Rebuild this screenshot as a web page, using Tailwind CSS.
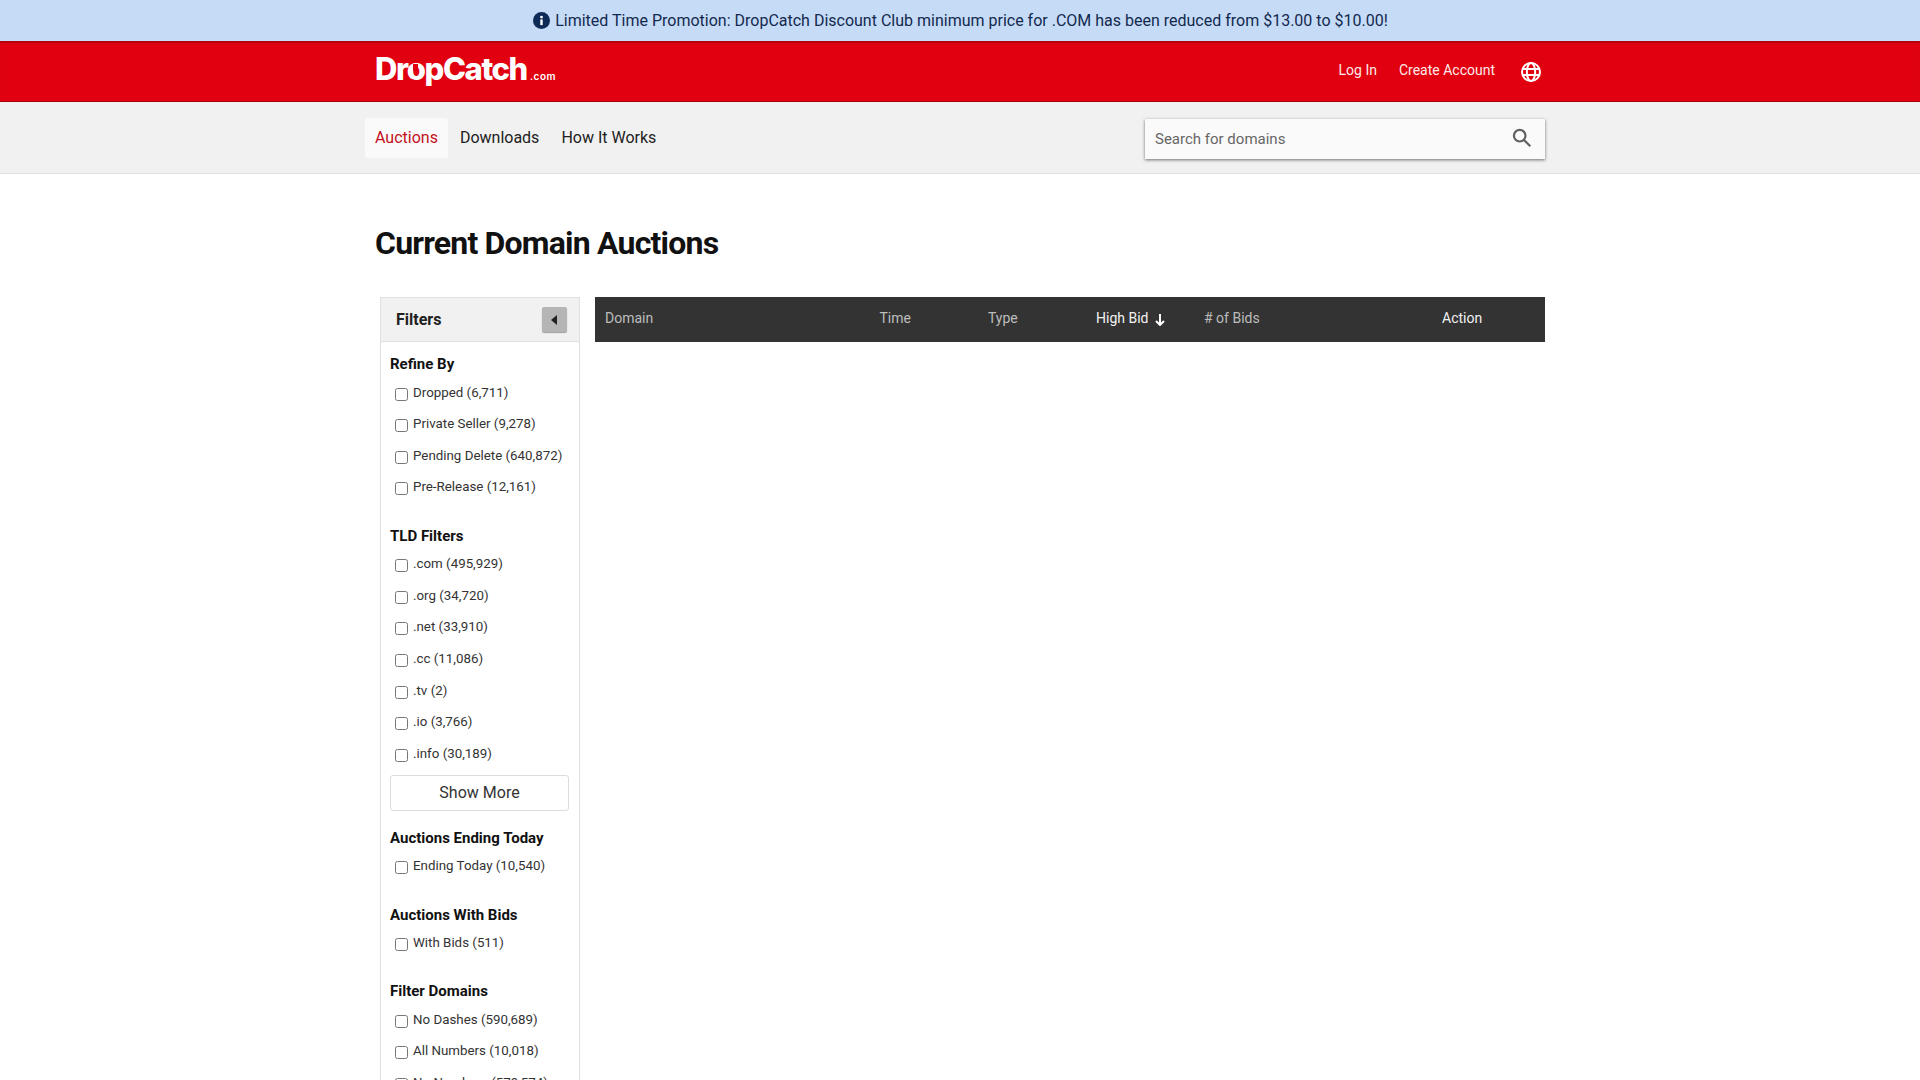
<!DOCTYPE html>
<html lang="en">
<head>
<meta charset="utf-8">
<title>Current Domain Auctions</title>
<script src="https://cdn.jsdelivr.net/npm/@tailwindcss/browser@4"></script>
</head>
<body class="h-[1080px] overflow-hidden bg-white font-[Roboto,sans-serif] text-[#212121]">
<div class="flex h-[41px] items-center justify-center gap-[6px] bg-[#c6dcf6] text-[16px] text-[#13294f]">
  <svg class="h-[17px] w-[17px] translate-x-[1px]" viewBox="0 0 24 24"><circle cx="12" cy="12" r="12" fill="#0e2a56"/><rect x="10.3" y="10.5" width="3.4" height="8" fill="#fff"/><circle cx="12" cy="7.2" r="2" fill="#fff"/></svg>
  <span>Limited Time Promotion: DropCatch Discount Club minimum price for .COM has been reduced from $13.00 to $10.00!</span>
</div>
<header class="h-[61px] border-y border-t-[#b3000b] border-b-[#a8000a] bg-[#e1000f] shadow-[inset_0_1px_1px_#b3000b]">
  <div class="mx-auto flex h-full w-[1190px] items-center justify-between pr-[14px] pl-[10px]">
    <div class="relative flex items-baseline pb-[7px] text-white">
      <span class="font-[Inter,sans-serif] text-[31px] leading-none font-extrabold tracking-[-1.4px]">DropCatch</span>
      <span class="ml-[3px] font-[Inter,sans-serif] text-[10px] leading-none font-semibold tracking-[0.5px]">.com</span>
      <span class="absolute top-[11px] left-[38px] h-[8px] w-[5px] rounded-t-[50%] rounded-b-full bg-[#e1000f]"></span>
    </div>
    <nav class="flex items-center pb-[2px] text-[14px] text-[#fdeaea]">
      <a class="mr-[22px]">Log In</a>
      <a class="mr-[26px]">Create Account</a>
      <svg class="h-[20px] w-[20px] translate-y-[1px]" viewBox="0 0 24 24" fill="none" stroke="#fff" stroke-width="2.4"><circle cx="12" cy="12" r="10.8"/><ellipse cx="12" cy="12" rx="5" ry="10.8"/><path d="M1.5 8.5h21M1.5 15.5h21"/></svg>
    </nav>
  </div>
</header>
<div class="h-[72px] border-b border-[#e0e0e0] bg-[#f1f1f1]">
  <div class="mx-auto flex h-full w-[1190px] items-center justify-between pr-[10px]">
    <nav class="flex items-center gap-[2px] text-[16px]">
      <a class="flex h-[40px] items-center rounded-[3px] bg-[#fafafa] px-[10px] text-[#c3101b]">Auctions</a>
      <a class="flex h-[40px] items-center px-[10px]">Downloads</a>
      <a class="flex h-[40px] items-center px-[10px]">How It Works</a>
    </nav>
    <div class="flex h-[40px] w-[400px] translate-y-[1px] items-center justify-between bg-[#fafafa] pr-[12px] pl-[10px] shadow-[0_1px_3px_rgba(0,0,0,0.55)]">
      <span class="translate-y-[1px] text-[15px] text-[#666]">Search for domains</span>
      <svg class="h-[22px] w-[22px] -translate-y-[1px]" viewBox="0 0 24 24" fill="none" stroke="#616161" stroke-width="2.4"><circle cx="9.5" cy="9.5" r="6.3"/><path d="M14.3 14.3 21 21"/></svg>
    </div>
  </div>
</div>
<main class="mx-auto w-[1190px]">
  <h1 class="mt-[49px] mb-[34px] pl-[10px] text-[32px] leading-[40px] font-bold tracking-[-0.8px] text-[#111]">Current Domain Auctions</h1>
  <div class="flex items-start pl-[15px]">
    <aside class="h-[800px] w-[200px] shrink-0 border-x border-[#e0e0e0]">
      <div class="flex h-[45px] items-center justify-between border border-x-0 border-[#e0e0e0] bg-[#f1f1f1] pr-[12px] pl-[15px]">
        <span class="text-[16px] font-bold">Filters</span>
        <button class="flex h-[25px] w-[25px] items-center justify-center rounded-[2px] bg-[#b5b5b5] pr-[2px] shadow-[0_1px_1px_rgba(0,0,0,0.35)]">
          <svg class="h-[10px] w-[6px]" viewBox="0 0 6 10"><path d="M6 0v10L0 5z" fill="#222"/></svg>
        </button>
      </div>
      <div class="px-[9px] text-[13.33px] text-[#333]">
        <h2 class="mt-[10px] mb-[2.5px] h-[24px] text-[15px] leading-[24px] font-bold text-[#111]">Refine By</h2>
        <label class="flex h-[31.5px] items-center gap-[5px] pl-[5px]"><input type="checkbox"><span class="mb-[3px]">Dropped (6,711)</span></label>
        <label class="flex h-[31.5px] items-center gap-[5px] pl-[5px]"><input type="checkbox"><span class="mb-[3px]">Private Seller (9,278)</span></label>
        <label class="flex h-[31.5px] items-center gap-[5px] pl-[5px]"><input type="checkbox"><span class="mb-[3px]">Pending Delete (640,872)</span></label>
        <label class="flex h-[31.5px] items-center gap-[5px] pl-[5px]"><input type="checkbox"><span class="mb-[3px]">Pre-Release (12,161)</span></label>

        <h2 class="mt-[19px] mb-[2.5px] h-[24px] text-[15px] leading-[24px] font-bold text-[#111]">TLD Filters</h2>
        <label class="flex h-[31.6px] items-center gap-[5px] pl-[5px]"><input type="checkbox"><span class="mb-[3px]">.com (495,929)</span></label>
        <label class="flex h-[31.6px] items-center gap-[5px] pl-[5px]"><input type="checkbox"><span class="mb-[3px]">.org (34,720)</span></label>
        <label class="flex h-[31.6px] items-center gap-[5px] pl-[5px]"><input type="checkbox"><span class="mb-[3px]">.net (33,910)</span></label>
        <label class="flex h-[31.6px] items-center gap-[5px] pl-[5px]"><input type="checkbox"><span class="mb-[3px]">.cc (11,086)</span></label>
        <label class="flex h-[31.6px] items-center gap-[5px] pl-[5px]"><input type="checkbox"><span class="mb-[3px]">.tv (2)</span></label>
        <label class="flex h-[31.6px] items-center gap-[5px] pl-[5px]"><input type="checkbox"><span class="mb-[3px]">.io (3,766)</span></label>
        <label class="flex h-[31.6px] items-center gap-[5px] pl-[5px]"><input type="checkbox"><span class="mb-[3px]">.info (30,189)</span></label>
        <button class="mt-[4px] h-[36px] w-[179px] rounded-[3px] border border-[#dcdcdc] bg-white text-[16px] text-[#333]">Show More</button>

        <h2 class="mt-[15px] mb-[1.5px] h-[24px] text-[15px] leading-[24px] font-bold text-[#111]">Auctions Ending Today</h2>
        <label class="flex h-[31.6px] items-center gap-[5px] pl-[5px]"><input type="checkbox"><span class="mb-[3px]">Ending Today (10,540)</span></label>

        <h2 class="mt-[20px] mb-[1.5px] h-[24px] text-[15px] leading-[24px] font-bold text-[#111]">Auctions With Bids</h2>
        <label class="flex h-[31.6px] items-center gap-[5px] pl-[5px]"><input type="checkbox"><span class="mb-[3px]">With Bids (511)</span></label>

        <h2 class="mt-[19px] mb-[2px] h-[24px] text-[15px] leading-[24px] font-bold text-[#111]">Filter Domains</h2>
        <label class="flex h-[31.6px] items-center gap-[5px] pl-[5px]"><input type="checkbox"><span class="mb-[3px]">No Dashes (590,689)</span></label>
        <label class="flex h-[31.6px] items-center gap-[5px] pl-[5px]"><input type="checkbox"><span class="mb-[3px]">All Numbers (10,018)</span></label>
        <label class="flex h-[31.6px] items-center gap-[5px] pl-[5px]"><input type="checkbox"><span class="mb-[3px]">No Numbers (579,574)</span></label>
      </div>
    </aside>
    <div class="ml-[15px] grid h-[45px] w-[950px] grid-cols-[274.5px_108.5px_108px_108px_238px_1fr] items-center bg-[#333] pl-[10px] text-[14px] text-[#bdbdbd]">
      <span class="mb-[2px]">Domain</span>
      <span class="mb-[2px]">Time</span>
      <span class="mb-[2px]">Type</span>
      <span class="mb-[2px] flex items-center gap-[7px] text-[#f2f2f2]">High Bid
        <svg class="mt-[3px] h-[12px] w-[10px]" viewBox="0 0 10 12" fill="none" stroke="#fff" stroke-width="2"><path d="M5 0v11M1 7l4 4 4-4"/></svg>
      </span>
      <span class="mb-[2px]"># of Bids</span>
      <span class="mb-[2px] text-[#f2f2f2]">Action</span>
    </div>
  </div>
</main>
</body>
</html>
